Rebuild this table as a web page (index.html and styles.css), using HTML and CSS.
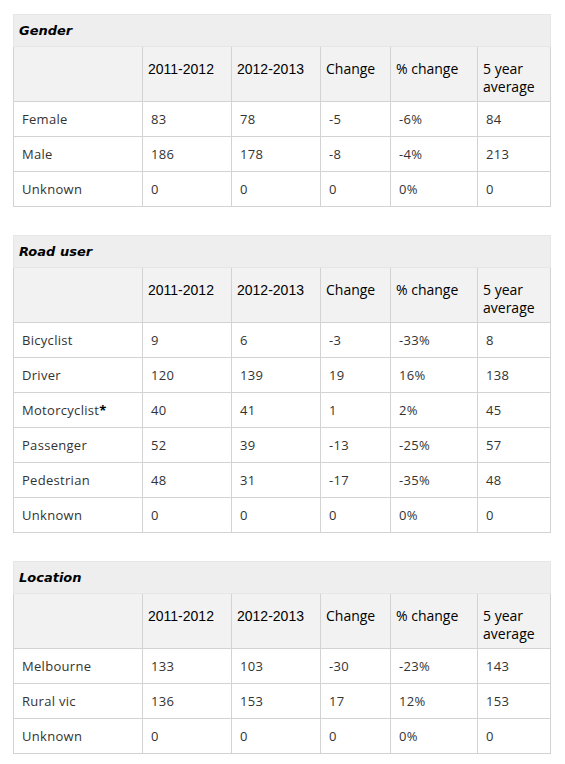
FILE: index.html
```html
<!DOCTYPE html>
<html lang="en">
<head>
    <meta charset="UTF-8">
    <title>Road fatalities</title>
    <link rel="stylesheet" href="styles.css">
</head>
<body>
    <div class="page">
        <table class="stats">
            <colgroup>
                <col class="c-label"><col class="c-year"><col class="c-year"><col class="c-change"><col class="c-pct"><col class="c-avg">
            </colgroup>
            <thead>
                <tr><th colspan="6" class="caption">Gender</th></tr>
                <tr class="head">
                    <th></th><th class="year">2011-2012</th><th class="year">2012-2013</th><th>Change</th><th>% change</th><th>5 year average</th>
                </tr>
            </thead>
            <tbody>
                <tr><td>Female</td><td>83</td><td>78</td><td>-5</td><td>-6%</td><td>84</td></tr>
                <tr><td>Male</td><td>186</td><td>178</td><td>-8</td><td>-4%</td><td>213</td></tr>
                <tr><td>Unknown</td><td>0</td><td>0</td><td>0</td><td>0%</td><td>0</td></tr>
            </tbody>
        </table>

        <table class="stats">
            <colgroup>
                <col class="c-label"><col class="c-year"><col class="c-year"><col class="c-change"><col class="c-pct"><col class="c-avg">
            </colgroup>
            <thead>
                <tr><th colspan="6" class="caption">Road user</th></tr>
                <tr class="head">
                    <th></th><th class="year">2011-2012</th><th class="year">2012-2013</th><th>Change</th><th>% change</th><th>5 year average</th>
                </tr>
            </thead>
            <tbody>
                <tr><td>Bicyclist</td><td>9</td><td>6</td><td>-3</td><td>-33%</td><td>8</td></tr>
                <tr><td>Driver</td><td>120</td><td>139</td><td>19</td><td>16%</td><td>138</td></tr>
                <tr><td>Motorcyclist<b>*</b></td><td>40</td><td>41</td><td>1</td><td>2%</td><td>45</td></tr>
                <tr><td>Passenger</td><td>52</td><td>39</td><td>-13</td><td>-25%</td><td>57</td></tr>
                <tr><td>Pedestrian</td><td>48</td><td>31</td><td>-17</td><td>-35%</td><td>48</td></tr>
                <tr><td>Unknown</td><td>0</td><td>0</td><td>0</td><td>0%</td><td>0</td></tr>
            </tbody>
        </table>

        <table class="stats">
            <colgroup>
                <col class="c-label"><col class="c-year"><col class="c-year"><col class="c-change"><col class="c-pct"><col class="c-avg">
            </colgroup>
            <thead>
                <tr><th colspan="6" class="caption">Location</th></tr>
                <tr class="head">
                    <th></th><th class="year">2011-2012</th><th class="year">2012-2013</th><th>Change</th><th>% change</th><th>5 year average</th>
                </tr>
            </thead>
            <tbody>
                <tr><td>Melbourne</td><td>133</td><td>103</td><td>-30</td><td>-23%</td><td>143</td></tr>
                <tr><td>Rural vic</td><td>136</td><td>153</td><td>17</td><td>12%</td><td>153</td></tr>
                <tr><td>Unknown</td><td>0</td><td>0</td><td>0</td><td>0%</td><td>0</td></tr>
            </tbody>
        </table>
    </div>
</body>
</html>
```

FILE: styles.css
```css
* {
    margin: 0;
    padding: 0;
    box-sizing: border-box;
}

body {
    font-family: 'Open Sans', 'Liberation Sans', sans-serif;
    font-size: 13px;
    color: #333;
    background-color: #fff;
}

.page {
    padding: 14px 15px 0 13px;
    display: flex;
    flex-direction: column;
    gap: 28px;
}

.stats {
    width: 537px;
    table-layout: fixed;
    border-collapse: collapse;
}

.c-label { width: 129px; }
.c-year { width: 89px; }
.c-change { width: 70px; }
.c-pct { width: 87px; }
.c-avg { width: 73px; }

.stats th,
.stats td {
    border: 1px solid #d3d3d3;
    text-align: left;
    vertical-align: top;
    line-height: 18px;
}

.caption {
    background-color: #eeeeee;
    border-color: #e6e6e6 !important;
    font-family: 'DejaVu Sans', Verdana, sans-serif;
    font-style: italic;
    font-weight: bold;
    font-size: 13px;
    color: #000;
    padding: 7px 5px 6px;
}

.head th {
    background-color: #f2f2f2;
    font-weight: normal;
    font-size: 14px;
    color: #000;
    padding: 13px 5px 5px;
}

.head th.year {
    font-family: 'Liberation Sans', Arial, sans-serif;
}

.stats td {
    padding: 8px 8px;
    height: 35px;
    vertical-align: middle;
    letter-spacing: 0.3px;
}

.stats td b {
    color: #000;
}
```
